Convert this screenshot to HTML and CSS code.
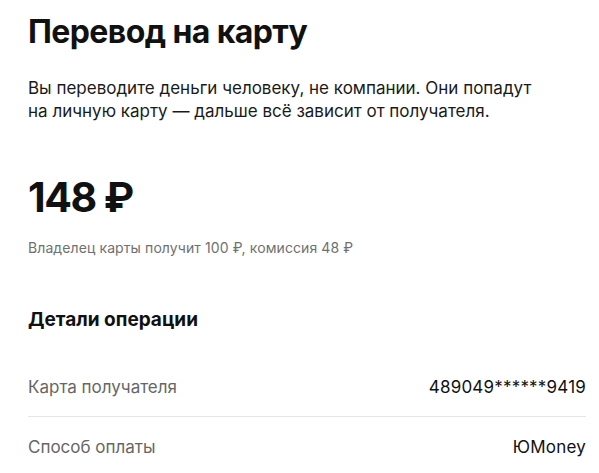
FILE: index.html
```html
<!DOCTYPE html>
<html>
<head>
  <meta charset="UTF-8">
  <title>Перевод на карту</title>
  <link rel="stylesheet" href="styles.css">
</head>
<body>
  <div class="transfer">
    <h1 class="transfer-title">Перевод на карту</h1>
    <p class="transfer-note">Вы переводите деньги человеку, не компании. Они попадут<br>на личную карту — дальше всё зависит от получателя.</p>

    <div class="amount">148 ₽</div>
    <div class="amount-hint">Владелец карты получит 100 ₽, комиссия 48 ₽</div>

    <h2 class="details-title">Детали операции</h2>
    <div class="details">
      <div class="details-row">
        <span class="details-label">Карта получателя</span>
        <span class="details-value">489049******9419</span>
      </div>
      <div class="details-row">
        <span class="details-label">Способ оплаты</span>
        <span class="details-value">ЮMoney</span>
      </div>
    </div>
  </div>
</body>
</html>
```

FILE: styles.css
```css
body {
  margin: 0;
  background: #fff;
  color: #111;
  font-family: Inter, "Noto Sans", sans-serif;
}
.transfer {
  padding: 12px 13px 0 28px;
}
.transfer-title {
  margin: 0;
  font-size: 32px;
  line-height: 40px;
  font-weight: 700;
  letter-spacing: -0.6px;
}
.transfer-note {
  margin: 25px 0 0;
  font-size: 17px;
  line-height: 23px;
  color: #1a1a1a;
}
.amount {
  margin-top: 50px;
  font-size: 41px;
  line-height: 48px;
  font-weight: 700;
  letter-spacing: -1.5px;
}
.amount-hint {
  margin-top: 17px;
  font-size: 14px;
  line-height: 20px;
  letter-spacing: 0.1px;
  color: #707070;
}
.details-title {
  margin: 50px 0 0;
  font-size: 19px;
  line-height: 24px;
  font-weight: 700;
}
.details {
  margin-top: 25px;
}
.details-row {
  display: flex;
  justify-content: space-between;
  align-items: center;
  height: 59px;
  font-size: 17px;
  line-height: 24px;
}
.details-row + .details-row {
  border-top: 1px solid #e6e6e6;
}
.details-label {
  color: #666;
}
.details-value {
  color: #111;
  letter-spacing: 0.2px;
}
```
